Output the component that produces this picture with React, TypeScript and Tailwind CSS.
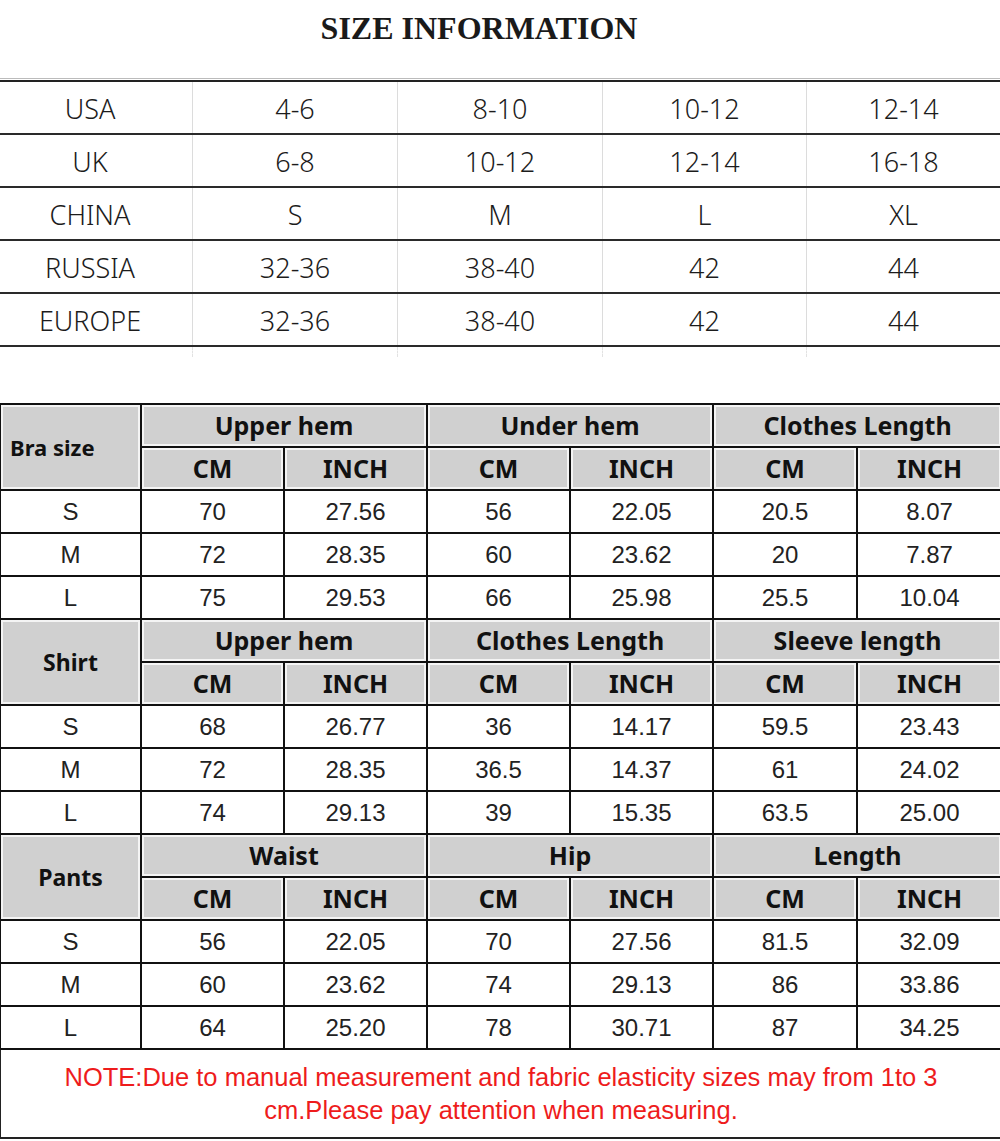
import React from 'react';

const regions = [
  ['USA', '4-6', '8-10', '10-12', '12-14'],
  ['UK', '6-8', '10-12', '12-14', '16-18'],
  ['CHINA', 'S', 'M', 'L', 'XL'],
  ['RUSSIA', '32-36', '38-40', '42', '44'],
  ['EUROPE', '32-36', '38-40', '42', '44'],
];

const sections = [
  {
    label: 'Bra size',
    left: true,
    groups: ['Upper hem', 'Under hem', 'Clothes Length'],
    rows: [
      ['S', '70', '27.56', '56', '22.05', '20.5', '8.07'],
      ['M', '72', '28.35', '60', '23.62', '20', '7.87'],
      ['L', '75', '29.53', '66', '25.98', '25.5', '10.04'],
    ],
  },
  {
    label: 'Shirt',
    groups: ['Upper hem', 'Clothes Length', 'Sleeve length'],
    rows: [
      ['S', '68', '26.77', '36', '14.17', '59.5', '23.43'],
      ['M', '72', '28.35', '36.5', '14.37', '61', '24.02'],
      ['L', '74', '29.13', '39', '15.35', '63.5', '25.00'],
    ],
  },
  {
    label: 'Pants',
    groups: ['Waist', 'Hip', 'Length'],
    rows: [
      ['S', '56', '22.05', '70', '27.56', '81.5', '32.09'],
      ['M', '60', '23.62', '74', '29.13', '86', '33.86'],
      ['L', '64', '25.20', '78', '30.71', '87', '34.25'],
    ],
  },
];

const head = 'border-2 border-[#111] bg-[#d0d0d0] shadow-[inset_0_0_0_2px_#f4f4f4] text-[25px] font-bold text-[#111] text-center';
const cell = 'border-2 border-[#111] text-[24px] text-[#222] text-center font-["Liberation_Sans",sans-serif]';

function CountryTable() {
  return (
    <div className="border-t border-[#bbb] pt-[1px]">
      <div className="border-t-2 border-[#222]">
        {regions.map(r => (
          <div key={r[0]} className="grid grid-cols-[192px_205px_205px_204px_194px] h-[53px] border-b-2 border-[#2a2a2a]">
            {r.map((v, i) => (
              <div
                key={i}
                className={`flex items-center justify-center pt-[3px] text-[27px] font-light text-[#1c1c1c] ${i > 0 ? 'border-l border-[#dcdcdc]' : 'pr-[12px]'}`}
              >
                {v}
              </div>
            ))}
          </div>
        ))}
        <div className="grid grid-cols-[192px_205px_205px_204px_194px] h-[10px]">
          {[0, 1, 2, 3, 4].map(i => (
            <div key={i} className={i > 0 ? 'border-l border-dashed border-[#e2e2e2]' : ''} />
          ))}
        </div>
      </div>
    </div>
  );
}

function MeasureTable() {
  return (
    <table className="w-[1002px] ml-[-1px] table-fixed border-collapse font-['Noto_Sans','Open_Sans',sans-serif]">
      <colgroup>
        <col className="w-[141px]" />
        <col className="w-[143px]" />
        <col className="w-[143px]" />
        <col className="w-[143px]" />
        <col className="w-[143px]" />
        <col className="w-[144px]" />
        <col className="w-[145px]" />
      </colgroup>
      <tbody>
        {sections.map(s => (
          <React.Fragment key={s.label}>
            <tr className="h-[43px]">
              <td rowSpan={2} className={`${head} ${s.left ? 'text-left pl-[9px] !text-[22px]' : '!text-[23px]'}`}>
                {s.label}
              </td>
              {s.groups.map(g => (
                <td key={g} colSpan={2} className={head}>
                  {g}
                </td>
              ))}
            </tr>
            <tr className="h-[43px]">
              {[0, 1, 2].flatMap(i => [
                <td key={`c${i}`} className={head}>CM</td>,
                <td key={`i${i}`} className={head}>INCH</td>,
              ])}
            </tr>
            {s.rows.map(r => (
              <tr key={r[0]} className="h-[43px]">
                {r.map((v, i) => (
                  <td key={i} className={cell}>
                    {v}
                  </td>
                ))}
              </tr>
            ))}
          </React.Fragment>
        ))}
        <tr className="h-[89px]">
          <td
            colSpan={7}
            className="border-2 border-[#222] text-center text-[25.5px] leading-[33px] text-[#ee1c1c] px-[50px] font-['Liberation_Sans',sans-serif]"
          >
            NOTE:Due to manual measurement and fabric elasticity sizes may from 1to 3 cm.Please pay attention when measuring.
          </td>
        </tr>
      </tbody>
    </table>
  );
}

export default function App() {
  return (
    <div className="w-[1000px] h-[1141px] bg-white overflow-hidden font-['Noto_Sans','Open_Sans',sans-serif]">
      <div className="h-[56px] flex items-center justify-center pr-[42px]">
        <h1 className="text-[32px] font-bold text-[#1a1a1a] font-['Liberation_Serif',serif]">
          SIZE INFORMATION
        </h1>
      </div>
      <div className="mt-[22px]">
        <CountryTable />
      </div>
      <div className="mt-[46px]">
        <MeasureTable />
      </div>
    </div>
  );
}
